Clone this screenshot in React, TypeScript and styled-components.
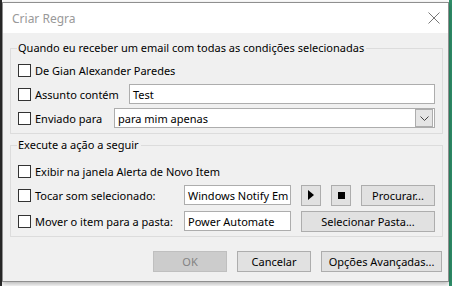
import React from "react";
import styled, { createGlobalStyle } from "styled-components";

const GlobalStyle = createGlobalStyle`
  html, body {
    margin: 0;
    padding: 0;
  }
  body {
    width: 452px;
    height: 286px;
    overflow: hidden;
    font-family: "Noto Sans", "Segoe UI", sans-serif;
    font-size: 11px;
    color: #000;
  }
`;

const Desktop = styled.div`
  width: 452px;
  height: 286px;
  box-sizing: border-box;
  padding: 2px 3px 4px 2px;
  background: linear-gradient(
    to right,
    #2b2b2b 0,
    #2b2b2b 2px,
    #ffffff 2px,
    #ffffff 449px,
    #2f8f6a 449px
  );
  display: flex;
`;

const Dialog = styled.div`
  flex: 1;
  display: flex;
  flex-direction: column;
  border: 1px solid #8f8f8f;
  background: #f0f0f0;
  box-shadow: 0 2px 5px rgba(0, 0, 0, 0.3);
`;

const TitleBar = styled.div`
  height: 30px;
  background: #fff;
  display: flex;
  align-items: center;
  justify-content: space-between;
  padding: 0 8px 0 9px;
  font-size: 12px;
  color: #999;
`;

const CloseIcon = styled.svg`
  width: 12px;
  height: 12px;
`;

const Body = styled.div`
  flex: 1;
  display: flex;
  flex-direction: column;
  padding: 7px 5px 8px 7px;
`;

const Group = styled.fieldset<{ $top?: number }>`
  margin: ${(p) => p.$top ?? 0}px 0 0 0;
  padding: 4px 7px 5px 7px;
  border: 1px solid #dcdcdc;
  display: flex;
  flex-direction: column;
  gap: 4px;
`;

const Legend = styled.legend`
  padding: 0 2px 0 1px;
  margin-left: -1px;
  line-height: 16px;
`;

const Row = styled.div<{ $top?: number }>`
  display: flex;
  align-items: center;
  height: 20px;
  margin-top: ${(p) => p.$top ?? 0}px;
`;

const Box = styled.span`
  width: 11px;
  height: 11px;
  border: 1px solid #333;
  background: #fff;
  flex: none;
`;

const Label = styled.span<{ $width?: number }>`
  margin-left: 4px;
  width: ${(p) => (p.$width ? `${p.$width}px` : "auto")};
  flex: none;
  white-space: nowrap;
`;

const Field = styled.div<{ $width?: number }>`
  box-sizing: border-box;
  height: 20px;
  ${(p) => (p.$width ? `width: ${p.$width}px; flex: none;` : "flex: 1;")}
  border: 1px solid #adadad;
  background: #fff;
  display: flex;
  align-items: center;
  padding-left: 3px;
  overflow: hidden;
  white-space: nowrap;
`;

const SelectField = styled(Field)`
  padding: 1px;
  padding-left: 3px;
  justify-content: space-between;
`;

const DropButton = styled.div`
  width: 16px;
  height: 16px;
  background: #e5e5e5;
  border: 1px solid #adadad;
  display: flex;
  align-items: center;
  justify-content: center;
`;

const Button = styled.div<{ $width: number; $disabled?: boolean }>`
  box-sizing: border-box;
  width: ${(p) => p.$width}px;
  height: 21px;
  flex: none;
  display: flex;
  align-items: center;
  justify-content: center;
  background: ${(p) => (p.$disabled ? "#cccccc" : "#e1e1e1")};
  border: 1px solid ${(p) => (p.$disabled ? "#bfbfbf" : "#adadad")};
  color: ${(p) => (p.$disabled ? "#838383" : "#000")};
  margin-left: 10px;
`;

const Footer = styled.div`
  display: flex;
  justify-content: flex-end;
  margin-top: 14px;
  padding-right: 1px;
`;

const CheckLabel = ({ text, width }: { text: string; width?: number }) => (
  <>
    <Box />
    <Label $width={width}>{text}</Label>
  </>
);

export default function App() {
  return (
    <Desktop>
      <GlobalStyle />
      <Dialog>
        <TitleBar>
          <span>Criar Regra</span>
          <CloseIcon viewBox="0 0 12 12">
            <path d="M0.5 0.5 L11.5 11.5 M11.5 0.5 L0.5 11.5" stroke="#777" strokeWidth="1" />
          </CloseIcon>
        </TitleBar>
        <Body>
          <Group>
            <Legend>Quando eu receber um email com todas as condições selecionadas</Legend>
            <Row>
              <CheckLabel text="De Gian Alexander Paredes" />
            </Row>
            <Row>
              <CheckLabel text="Assunto contém" width={94} />
              <Field>Test</Field>
            </Row>
            <Row>
              <CheckLabel text="Enviado para" width={79} />
              <SelectField>
                <span>para mim apenas</span>
                <DropButton>
                  <svg width="9" height="5" viewBox="0 0 9 5">
                    <path d="M0.5 0.5 L4.5 4.5 L8.5 0.5" stroke="#444" fill="none" />
                  </svg>
                </DropButton>
              </SelectField>
            </Row>
          </Group>
          <Group $top={3}>
            <Legend>Execute a ação a seguir</Legend>
            <Row $top={4}>
              <CheckLabel text="Exibir na janela Alerta de Novo Item" />
            </Row>
            <Row>
              <CheckLabel text="Tocar som selecionado:" width={149} />
              <Field $width={107}>Windows Notify Em</Field>
              <Button $width={20}>
                <svg width="6" height="10" viewBox="0 0 6 10">
                  <path d="M0 0 L6 5 L0 10 Z" fill="#000" />
                </svg>
              </Button>
              <Button $width={20}>
                <svg width="7" height="7" viewBox="0 0 7 7">
                  <rect width="7" height="7" fill="#000" />
                </svg>
              </Button>
              <Button $width={74}>Procurar...</Button>
            </Row>
            <Row $top={2}>
              <CheckLabel text="Mover o item para a pasta:" width={149} />
              <Field $width={107}>Power Automate</Field>
              <Button $width={134}>Selecionar Pasta...</Button>
            </Row>
          </Group>
          <Footer>
            <Button $width={74} $disabled>
              OK
            </Button>
            <Button $width={74}>Cancelar</Button>
            <Button $width={121}>Opções Avançadas...</Button>
          </Footer>
        </Body>
      </Dialog>
    </Desktop>
  );
}
